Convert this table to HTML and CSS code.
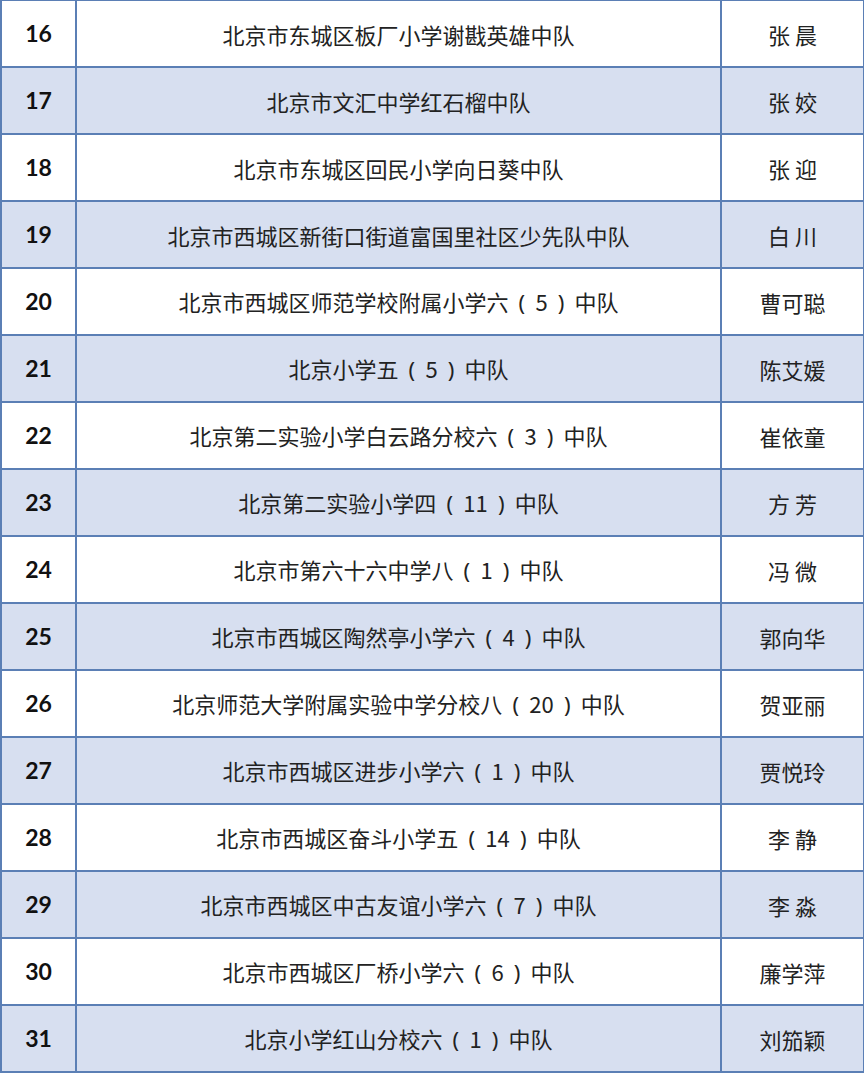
FILE: index.html
```html
<!DOCTYPE html>
<html lang="zh-CN">
<head>
<meta charset="utf-8">
<title>名单</title>
<link rel="stylesheet" href="styles.css">
</head>
<body>
<table class="list">
<colgroup><col class="c-no"><col class="c-team"><col class="c-name"></colgroup>
<tbody>
<tr><td class="no">16</td><td>北京市东城区板厂小学谢戡英雄中队</td><td>张 晨</td></tr>
<tr class="alt"><td class="no">17</td><td>北京市文汇中学红石榴中队</td><td>张 姣</td></tr>
<tr><td class="no">18</td><td>北京市东城区回民小学向日葵中队</td><td>张 迎</td></tr>
<tr class="alt"><td class="no">19</td><td>北京市西城区新街口街道富国里社区少先队中队</td><td>白 川</td></tr>
<tr><td class="no">20</td><td>北京市西城区师范学校附属小学六<span class="pa">(</span>5<span class="pa">)</span>中队</td><td>曹可聪</td></tr>
<tr class="alt"><td class="no">21</td><td>北京小学五<span class="pa">(</span>5<span class="pa">)</span>中队</td><td>陈艾媛</td></tr>
<tr><td class="no">22</td><td>北京第二实验小学白云路分校六<span class="pa">(</span>3<span class="pa">)</span>中队</td><td>崔依童</td></tr>
<tr class="alt"><td class="no">23</td><td>北京第二实验小学四<span class="pa">(</span>11<span class="pa">)</span>中队</td><td>方 芳</td></tr>
<tr><td class="no">24</td><td>北京市第六十六中学八<span class="pa">(</span>1<span class="pa">)</span>中队</td><td>冯 微</td></tr>
<tr class="alt"><td class="no">25</td><td>北京市西城区陶然亭小学六<span class="pa">(</span>4<span class="pa">)</span>中队</td><td>郭向华</td></tr>
<tr><td class="no">26</td><td>北京师范大学附属实验中学分校八<span class="pa">(</span>20<span class="pa">)</span>中队</td><td>贺亚丽</td></tr>
<tr class="alt"><td class="no">27</td><td>北京市西城区进步小学六<span class="pa">(</span>1<span class="pa">)</span>中队</td><td>贾悦玲</td></tr>
<tr><td class="no">28</td><td>北京市西城区奋斗小学五<span class="pa">(</span>14<span class="pa">)</span>中队</td><td>李 静</td></tr>
<tr class="alt"><td class="no">29</td><td>北京市西城区中古友谊小学六<span class="pa">(</span>7<span class="pa">)</span>中队</td><td>李 淼</td></tr>
<tr><td class="no">30</td><td>北京市西城区厂桥小学六<span class="pa">(</span>6<span class="pa">)</span>中队</td><td>廉学萍</td></tr>
<tr class="alt"><td class="no">31</td><td>北京小学红山分校六<span class="pa">(</span>1<span class="pa">)</span>中队</td><td>刘笳颖</td></tr>
</tbody>
</table>
</body>
</html>
```
FILE: styles.css
```css
html, body {
  margin: 0;
  padding: 0;
  background: #ffffff;
}
.list {
  border-collapse: collapse;
  width: 863px;
  margin-top: -1px;
  table-layout: fixed;
  font-family: "Noto Sans CJK SC", "Noto Sans", sans-serif;
  font-size: 22px;
  color: #222222;
}
.c-no { width: 75px; }
.c-team { width: 645px; }
.c-name { width: 143px; }
.list td {
  border: 2px solid #5b7fb5;
  height: 65px;
  padding: 0;
  text-align: center;
  vertical-align: middle;
  line-height: 1;
  white-space: nowrap;
}
.list tr.alt td {
  background: #d7dff0;
}
.list td.no {
  font-family: Lato, "Open Sans", sans-serif;
  font-weight: 700;
  font-size: 23px;
  color: #111111;
}
.pa {
  display: inline-block;
  width: 27px;
  text-align: center;
  font-family: "Noto Sans", sans-serif;
  font-weight: 400;
}
```
